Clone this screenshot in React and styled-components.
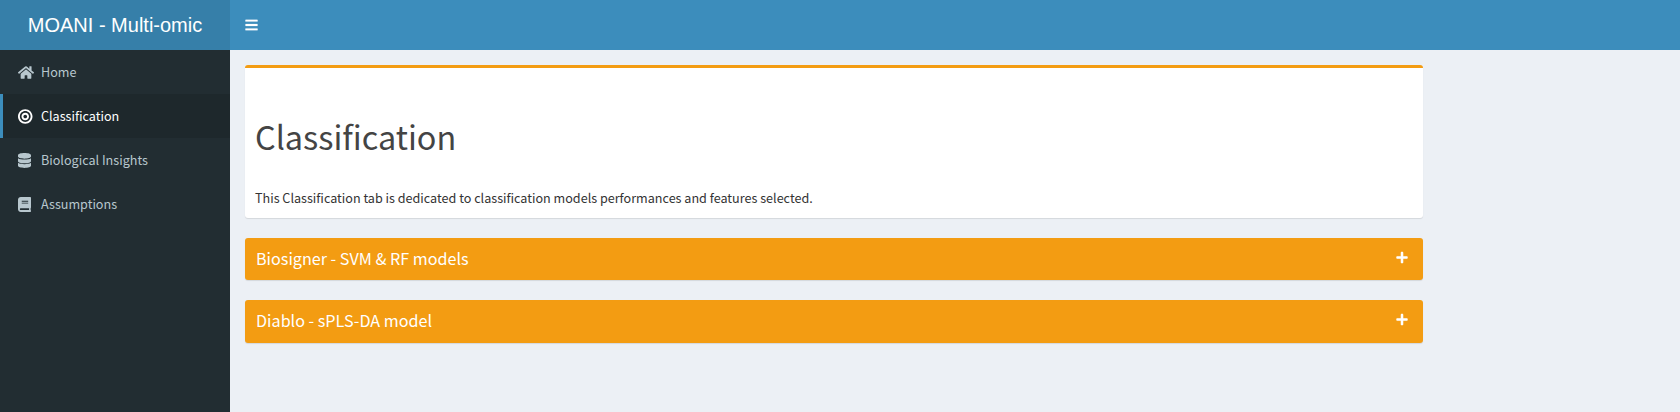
import React from "react";
import styled, { createGlobalStyle } from "styled-components";
import { FaBars, FaHome, FaBullseye, FaDatabase, FaBook, FaPlus } from "react-icons/fa";

const GlobalStyle = createGlobalStyle`
  *, *::before, *::after { box-sizing: border-box; }
  body {
    margin: 0;
    background: #ecf0f5;
    color: #333;
    font-family: "Source Sans Pro", "Noto Sans CJK SC", sans-serif;
    font-size: 12.6px;
    line-height: 20px;
    overflow: hidden;
  }
`;

const Page = styled.div`
  display: flex;
  flex-direction: column;
  height: 100vh;
`;

const Header = styled.header`
  display: flex;
  flex: none;
  height: 50px;
  background: #3c8dbc;
`;

const Logo = styled.div`
  width: 230px;
  background: #367fa9;
  color: #fff;
  font: 20px/50px "Helvetica Neue", Helvetica, "Liberation Sans", Arial, sans-serif;
  text-align: center;
  white-space: nowrap;
`;

const MenuToggle = styled.button`
  display: flex;
  align-items: center;
  padding: 0 15px;
  border: 0;
  background: transparent;
  color: #fff;
  svg { display: block; width: 13px; height: 14px; stroke: currentColor; stroke-width: 8; }
`;

const Body = styled.div`
  display: flex;
  flex: 1;
  min-height: 0;
`;

const Sidebar = styled.nav`
  width: 230px;
  background: #222d32;
`;

const NavItem = styled.a`
  display: flex;
  align-items: center;
  height: 44px;
  padding-left: 15px;
  border-left: 3px solid ${(p) => (p.$active ? "#3c8dbc" : "transparent")};
  background: ${(p) => (p.$active ? "#1e282c" : "transparent")};
  color: ${(p) => (p.$active ? "#fff" : "#b8c7ce")};
`;

const NavIcon = styled.span`
  display: flex;
  width: 23px;
  svg { display: block; flex: none; width: ${(p) => p.$width}px; height: 15px; }
`;

const NavLabel = styled.span`
  white-space: nowrap;
`;

const Content = styled.main`
  flex: 1;
  display: flex;
  flex-direction: column;
  gap: 20px;
  padding: 15px;
`;

const Card = styled.section`
  width: 1178px;
  height: 153px;
  padding: 0 10px;
  border-top: 3px solid #f39c12;
  border-radius: 3px;
  background: #fff;
  box-shadow: 0 1px 1px rgba(0, 0, 0, 0.1);
`;

const Title = styled.h1`
  margin: 48px 0 0;
  color: #444;
  font-size: 32.4px;
  font-weight: 400;
  line-height: 40px;
`;

const Intro = styled.p`
  margin: 32px 0 0;
`;

const Panel = styled.section`
  display: flex;
  align-items: flex-start;
  justify-content: space-between;
  width: 1178px;
  height: ${(p) => p.$height}px;
  padding: 10px 15px 0 11px;
  border-radius: 3px;
  background: #f39c12;
  box-shadow: 0 1px 1px rgba(0, 0, 0, 0.1);
  color: #fff;
`;

const PanelTitle = styled.h3`
  margin: 0;
  font-size: 16.15px;
  font-weight: 400;
  line-height: 20px;
`;

const Expand = styled.button`
  display: flex;
  margin: 3px 0 0;
  padding: 0;
  border: 0;
  background: transparent;
  color: #fff;
  svg { display: block; width: 12px; height: 13px; stroke: currentColor; stroke-width: 4; }
`;

const items = [
  { label: "Home", Icon: FaHome, width: 16 },
  { label: "Classification", Icon: FaBullseye, width: 14.5, active: true },
  { label: "Biological Insights", Icon: FaDatabase, width: 13 },
  { label: "Assumptions", Icon: FaBook, width: 13 },
];

const panels = [
  { title: "Biosigner - SVM & RF models", height: 42 },
  { title: "Diablo - sPLS-DA model", height: 43 },
];

export default function App() {
  return (
    <Page>
      <GlobalStyle />
      <Header>
        <Logo>MOANI - Multi-omic</Logo>
        <MenuToggle aria-label="Toggle navigation"><FaBars /></MenuToggle>
      </Header>
      <Body>
        <Sidebar>
          {items.map(({ label, Icon, active, width }) => (
            <NavItem key={label} $active={active}>
              <NavIcon $width={width}><Icon /></NavIcon>
              <NavLabel>{label}</NavLabel>
            </NavItem>
          ))}
        </Sidebar>
        <Content>
          <Card>
            <Title>Classification</Title>
            <Intro>This Classification tab is dedicated to classification models performances and features selected.</Intro>
          </Card>
          {panels.map(({ title, height }) => (
            <Panel key={title} $height={height}>
              <PanelTitle>{title}</PanelTitle>
              <Expand aria-label="Expand"><FaPlus /></Expand>
            </Panel>
          ))}
        </Content>
      </Body>
    </Page>
  );
}
